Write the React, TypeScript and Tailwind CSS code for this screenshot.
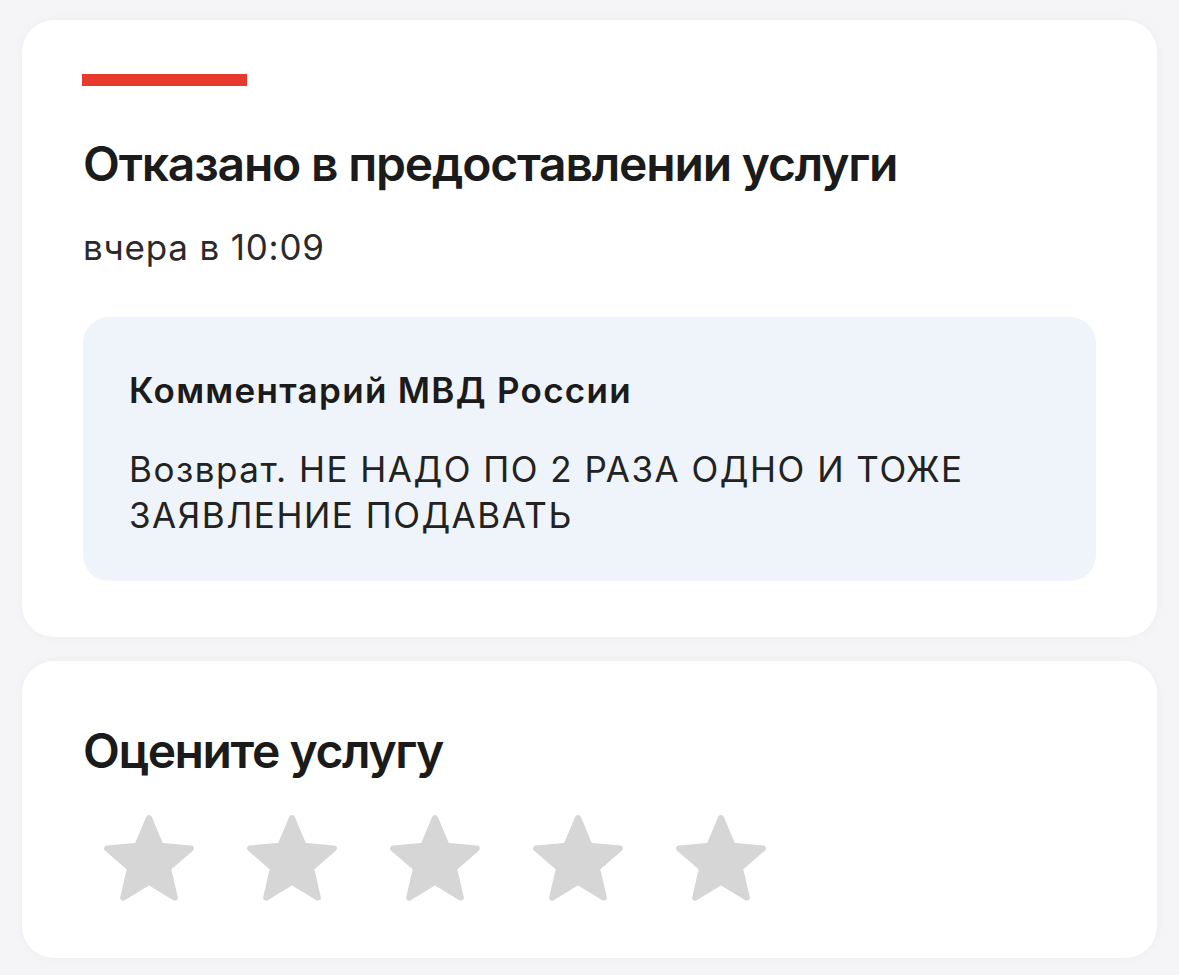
import React from 'react';

const STAR_POINTS =
  '50,10 61.76,37.82 91.85,40.4 69.02,60.18 75.86,89.6 50,74 24.14,89.6 30.98,60.18 8.15,40.4 38.24,37.82';

function Star() {
  return (
    <svg viewBox="0 0 100 100" className="h-[100px] w-[100px] shrink-0" aria-hidden="true">
      <polygon
        points={STAR_POINTS}
        fill="#d6d6d6"
        stroke="#d6d6d6"
        strokeWidth={6}
        strokeLinejoin="round"
      />
    </svg>
  );
}

export default function App() {
  const rating = [1, 2, 3, 4, 5];

  return (
    <div
      className="min-h-[975px] bg-[#f5f5f7] px-[22px] pt-[20px] pb-[18px] text-[#1b1b1b]"
      style={{ fontFamily: 'Inter, "Noto Sans", sans-serif' }}
    >
      {/* Status card */}
      <div className="rounded-[32px] bg-white px-[61px] pt-[54px] pb-[56px] shadow-[0_0_10px_rgba(0,0,0,0.035)]">
        <div className="-ml-px h-3 w-[165px] bg-[#e8392f]" />

        <h1 className="mt-[50px] text-[48px] leading-[56px] font-semibold tracking-[-1.2px]">
          Отказано в предоставлении услуги
        </h1>
        <p className="mt-[34px] text-[35px] leading-[42px] tracking-[0.8px] text-[#2a2a2a]">вчера в 10:09</p>

        {/* Comment from the department */}
        <div className="mt-[49px] rounded-[26px] bg-[#eff3fa] pl-[46px] pr-10 pt-[52px] pb-[43px]">
          <h2 className="text-[35px] leading-[42px] font-semibold tracking-[1.3px]">Комментарий МВД России</h2>
          <p className="mt-[35px] text-[35px] leading-[46px] tracking-[1.5px] text-[#222]">
            Возврат. НЕ НАДО ПО 2 РАЗА ОДНО И ТОЖЕ
            <br />
            ЗАЯВЛЕНИЕ ПОДАВАТЬ
          </p>
        </div>
      </div>

      {/* Rating card */}
      <div className="mt-6 rounded-[32px] bg-white px-[61px] pt-[62px] pb-[50px] shadow-[0_0_10px_rgba(0,0,0,0.035)]">
        <h2 className="text-[48px] leading-[56px] font-semibold tracking-[-1.4px]">Оцените услугу</h2>
        <div className="mt-[29px] ml-4 flex gap-[43px]">
          {rating.map((n) => (
            <button key={n} type="button" aria-label={`Оценка ${n}`} className="cursor-pointer">
              <Star />
            </button>
          ))}
        </div>
      </div>
    </div>
  );
}
